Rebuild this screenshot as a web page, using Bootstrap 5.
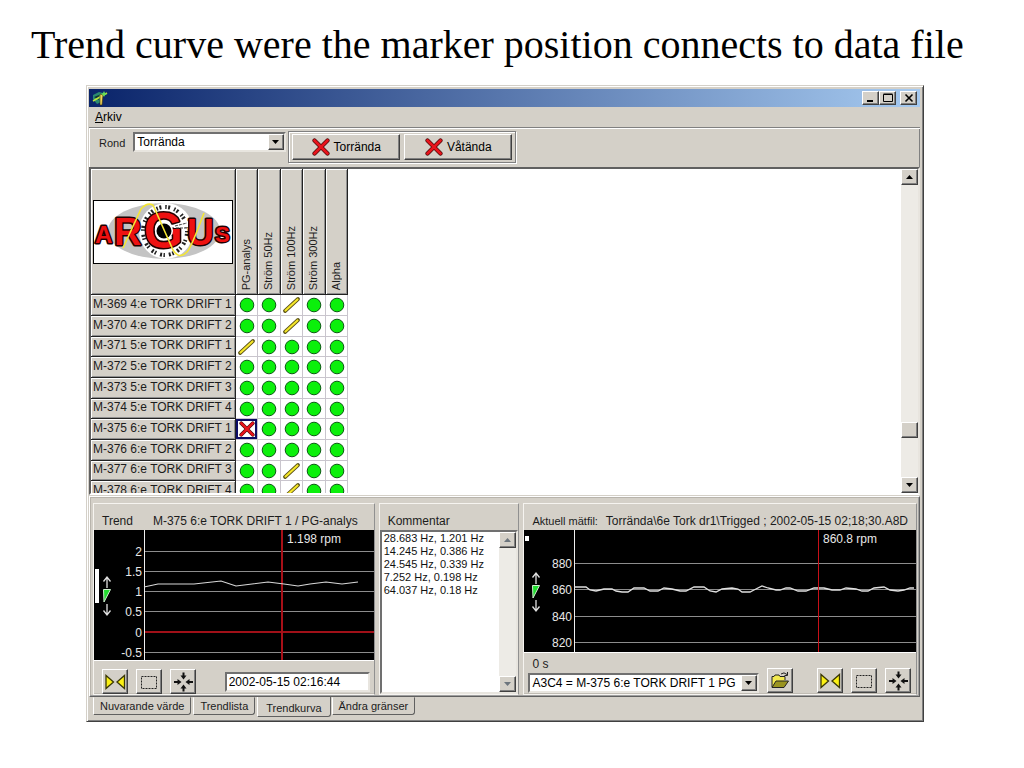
<!DOCTYPE html>
<html lang="sv">
<head>
<meta charset="utf-8">
<meta name="viewport" content="width=device-width, initial-scale=1">
<title>Argus trend</title>
<link href="https://cdn.jsdelivr.net/npm/bootstrap@5.3.0/dist/css/bootstrap.min.css" rel="stylesheet">
<style>
:root{--face:#d4d0c8;--lite:#fff;--shade:#808080;--dark:#404040}
body{background:#fff;color:#1c1c1c;font:12px/14px "Liberation Sans",Arial,sans-serif}
h1{font:40px/46px "Liberation Serif","Times New Roman",serif;color:#000;padding:22px 0 0 31px}
.app-window{margin:17px 100px 40px 86px;background:var(--face);border:1px solid;border-color:#d4d0c8 #404040 #404040 #d4d0c8;box-shadow:inset 1px 1px #fff,inset -1px -1px #808080;padding:3px 3px 4px 2px}
.title-bar{height:18px;background:linear-gradient(90deg,#0a246a,#a6caf0);padding:0 3px}
.raised{background:var(--face);border:1px solid;border-color:#fff #404040 #404040 #fff;box-shadow:inset -1px -1px #808080;border-radius:0;padding:0;color:#000}
.sunken{border:2px solid;border-color:#707070 #e8e5df #e8e5df #707070;border-radius:0;background:#fff}
.cap-btn{width:17px;height:14px;line-height:0}
.menu-bar{height:20px;padding:3px 6px}
.menu-bar a{color:#000;text-decoration:none}
.tool-bar{height:40px;border-top:1px solid #808080;box-shadow:inset 1px 1px #fff,inset -1px 0 #808080;padding:4px 0 0 10px;font-size:11px}
.pick{position:relative}
.pick select{appearance:none;width:100%;height:20px;padding:0 18px 0 2px;font:inherit;color:#000;line-height:15px;outline:0}
.pick span{position:absolute;right:2px;top:2px;width:16px;height:16px;pointer-events:none;line-height:0}
.round-pick{width:153px;font-size:12px}
.frame{border:1px solid #808080;box-shadow:inset 1px 1px #fff,1px 1px #fff;padding:2px 3px;height:32px;gap:4px;margin:-1px 0 0 2px}
.frame button{width:108px;height:26px;font-size:12px;gap:4px}
.status-view{height:328px;border:2px solid;border-color:#606060 #e8e5df #fff #606060;background:#fff;overflow:hidden}
.status{border-collapse:separate;border-spacing:0;table-layout:fixed;width:257px;height:0}
.status th{background:var(--face);font-weight:400;padding:0;border-right:1px solid #222;border-bottom:1px solid #222;box-shadow:inset 1px 1px #fff,inset -1px -1px #909090;color:#1c1c1c}
.status thead th{height:126px;vertical-align:bottom}
.status thead th:first-child{vertical-align:middle}
.status tbody th{height:21px;padding:0 0 3px 2px;line-height:14px;white-space:nowrap}
.status tbody td{padding:0;border-right:1px solid #c9c5cd;border-bottom:1px solid #c9c5cd;text-align:center;line-height:0;height:21px}
.status tbody tr:nth-child(3n) th,.status tbody tr:nth-child(3n) td{height:20px}
.status tbody td.picked{box-shadow:inset 0 0 0 2px #0c0c66}
.upright{writing-mode:vertical-rl;transform:rotate(180deg);font-size:11px;line-height:16px;padding-top:4px;margin:0 auto;width:18px;white-space:nowrap}
.brand-mark{display:block;margin:0 0 0 2px}
.scroller{width:17px;background:#edebe6}
.scroller button{width:17px;height:16px;line-height:0}
.tab-page{margin-top:1px;border:1px solid;border-color:#fff #606060 #606060 #fff;box-shadow:inset -1px -1px #a0a0a0,inset 1px 1px #b8b4ac;padding:6px 2px 2px 3px;height:201px}
.panes{display:grid;grid-template-columns:282fr 141fr 394fr;gap:4px;height:100%}
.pane{border:1px solid;border-color:#f6f4f0 #909090 #f6f4f0 #f6f4f0;box-shadow:inset 0 -1px #c0bcb4;min-width:0}
.pane-head{height:26px;padding:10px 8px 0;white-space:nowrap}
.file-label{font-size:11px;width:78px}
.plot{display:block;width:100%;background:#000;border-bottom:1px solid #fff}
.plot text{fill:#e8e8e8;font:12px "Liberation Sans",Arial,sans-serif}
.plot .num{text-anchor:end}
.sq{width:26px;height:25px;line-height:0}
.stamp{width:145px;height:20px;padding:0 2px;font:inherit;color:#000}
.chan-row{padding:0 5px 0 4px}
.chan-label{height:20px;padding:4px 4px 0}
.note{resize:none;border:0;padding:0 0 0 2px;font:11px/13px "Liberation Sans",Arial,sans-serif;color:#111;outline:0;overflow:hidden;min-width:0}
.tab-row{height:20px;padding-left:4px}
.tab-row button{background:var(--face);border:1px solid;border-color:transparent #606060 #606060 #fff;height:18px;padding:0 6px;border-radius:0 0 3px 1px;font:11px/15px "Liberation Sans",Arial,sans-serif;color:#1c1c1c;margin-right:2px;white-space:nowrap}
.tab-row button.on{height:20px;padding:3px 8px 0;margin:0 1px 0 0;border-top:0}
</style>
</head>
<body>
<svg width="0" height="0" class="position-absolute" aria-hidden="true">
<defs>
<symbol id="up" viewBox="0 0 14 12"><path d="M3 8h7L6.500 4z" fill="currentColor"/></symbol>
<symbol id="down" viewBox="0 0 14 12"><path d="M3 4h7L6.500 8z" fill="currentColor"/></symbol>
<symbol id="ok" viewBox="0 0 16 16"><circle cx="8" cy="8" r="6.800" fill="#0bf00b" stroke="#0c5a14"/></symbol>
<symbol id="pen" viewBox="0 0 20 18"><path d="M3 15L16 3" stroke="#5a5216" stroke-width="3.800" stroke-linecap="round"/><path d="M3.500 14.500L15.500 3.500" stroke="#f5e62a" stroke-width="2.200" stroke-linecap="round"/></symbol>
<symbol id="cross" viewBox="0 0 18 18"><path d="M2.500 2.500L15.500 15.500M15.500 2.500L2.500 15.500" stroke="#4a0808" stroke-width="4.200" stroke-linecap="round"/><path d="M2.500 2.500L15.500 15.500M15.500 2.500L2.500 15.500" stroke="#e8141c" stroke-width="2.800" stroke-linecap="round"/></symbol>
<symbol id="bow" viewBox="0 0 24 22"><path d="M3 4.500v13L10.500 11zM21.500 4.500v13L14 11z" fill="#fbf014" stroke="#3a3806" stroke-width="1.300"/></symbol>
<symbol id="marquee" viewBox="0 0 24 22"><path d="M4.500 5.500h15v12h-15z" fill="none" stroke="#222" stroke-dasharray="2 1"/></symbol>
<symbol id="center" viewBox="0 0 24 22"><path d="M12.500 1.500v4M12.500 20.500v-4M3 11h5M22 11h-5" stroke="#111" stroke-width="2"/><path d="M9.500 4.500h6L12.500 8.500zM9.500 17.500h6L12.500 13.500zM6.500 8v6L10.500 11zM18.500 8v6L14.500 11z" fill="#111"/></symbol>
<symbol id="folder" viewBox="0 0 24 22"><path d="M4 17V6.500h2l1-1.500h4l1 1.500h5V10" fill="#f3ea50" stroke="#222"/><path d="M4 17.500l4-6.500h12.500l-4.500 6.500z" fill="#9a9420" stroke="#222"/><path d="M13 4q3-2.500 6 .5M19.500 2v3.500h-3" fill="none" stroke="#222"/></symbol>
<symbol id="spin" viewBox="0 0 12 42"><path d="M6 2v11M2.500 6.500L6 2l3.500 4.500M6 40V29M2.500 35.500L6 40l3.500-4.500" fill="none" stroke="#e0e0e0" stroke-width="1.300"/><path d="M2.500 14.500h7L3 27z" fill="#22dd30" stroke="#d0f0d0"/></symbol>
</defs>
</svg>

<h1 class="m-0 text-nowrap">Trend curve were the marker position connects to data file</h1>

<main class="app-window">
  <header class="title-bar d-flex align-items-center">
    <svg width="16" height="16" viewBox="0 0 16 16" aria-hidden="true"><path d="M1 5l6-3 4 1-2 9-4 2-4-5z" fill="#2b8a70"/><path d="M2 7l5-2v5z" fill="#0d3436"/><path d="M1 11L15 3" stroke="#bde53a" stroke-width="1.500"/><path d="M8 4l3 1-1 10H8z" fill="#f0d85a" stroke="#3a2c08" stroke-width=".6"/><path d="M12 1l1 2 2 1-2 1-1 2-1-2-2-1 2-1z" fill="#63dc58"/></svg>
    <div class="ms-auto d-flex">
      <button class="raised cap-btn" aria-label="Minimera"><svg width="14" height="12"><path d="M3 9h6" stroke="#000" stroke-width="2"/></svg></button>
      <button class="raised cap-btn" aria-label="Maximera"><svg width="14" height="12"><path d="M2.500 2.500h9v7h-9zM2.500 2h9" fill="none" stroke="#000"/></svg></button>
      <button class="raised cap-btn ms-1" aria-label="Stäng"><svg width="14" height="12"><path d="M3.500 2.500l7 7M10.500 2.500l-7 7" stroke="#000" stroke-width="1.600"/></svg></button>
    </div>
  </header>
  <nav class="menu-bar"><a href="#"><u>A</u>rkiv</a></nav>

  <div class="tool-bar d-flex align-items-start">
    <label for="rond" class="me-2 pt-1">Rond</label>
    <div class="pick round-pick"><select id="rond" class="sunken"><option>Torrända</option></select><span class="raised"><svg width="14" height="14" viewBox="0 0 14 12"><use href="#down"/></svg></span></div>
    <div class="frame d-flex">
      <button class="raised d-flex align-items-center justify-content-center"><svg width="18" height="18"><use href="#cross"/></svg>Torrända</button>
      <button class="raised d-flex align-items-center justify-content-center"><svg width="18" height="18"><use href="#cross"/></svg>Våtända</button>
    </div>
  </div>

  <section class="status-view d-flex">
    <div class="flex-grow-1">
      <table class="status">
        <colgroup><col style="width:145px"><col style="width:22px"><col style="width:23px"><col style="width:22px"><col style="width:23px"><col style="width:22px"></colgroup>
        <thead><tr>
          <th>
            <svg class="brand-mark" width="140" height="64" viewBox="0 0 140 64" role="img" aria-label="Argus">
              <rect x=".5" y=".5" width="139" height="63" fill="#fff" stroke="#000"/>
              <ellipse cx="71" cy="31" rx="56" ry="28" fill="#c4c4c4"/>
              <ellipse cx="73" cy="31" rx="27" ry="28" fill="#fff"/>
              <ellipse cx="72" cy="31" rx="22" ry="24" fill="none" stroke="#222" stroke-width="4" stroke-dasharray="1.500 1.500 2 4"/>
              <g font-family="Liberation Sans,Arial,sans-serif" font-weight="700" fill="#ee1111" stroke="#200" stroke-width="3" paint-order="stroke" stroke-linejoin="round">
                <text x="2" y="43" font-size="24">A</text>
                <text x="122" y="42" font-size="22">S</text>
                <text x="21" y="45" font-size="38">R</text>
                <text x="94" y="45" font-size="37">U</text>
                <text x="51" y="48" font-size="50">G</text>
              </g>
              <circle cx="71" cy="31" r="9" fill="#fff"/><circle cx="71" cy="31" r="7.500" fill="#000"/>
              <path d="M81 25l14-4v6l-14 1z" fill="#fff"/><path d="M82 26l12-3M83 28h12" stroke="#444" stroke-dasharray="3 1"/>
              <path d="M30 48L48 9Q54 2 60 5L80 50Q86 60 94 52Q98 48 111 13" fill="none" stroke="#f4e634" stroke-width="1.600"/>
            </svg>
          </th>
          <th><div class="upright">PG-analys</div></th><th><div class="upright">Ström 50Hz</div></th><th><div class="upright">Ström 100Hz</div></th><th><div class="upright">Ström 300Hz</div></th><th><div class="upright">Alpha</div></th>
        </tr></thead>
        <tbody id="rows"></tbody>
      </table>
    </div>
    <div class="scroller d-flex flex-column">
      <button class="raised" aria-label="Upp"><svg width="14" height="12"><use href="#up"/></svg></button>
      <button class="raised mt-auto" aria-label="Läge"></button>
      <button class="raised" style="margin-top:39px" aria-label="Ned"><svg width="14" height="12"><use href="#down"/></svg></button>
    </div>
  </section>

  <section class="tab-page">
    <div class="panes">
      <div class="pane">
        <div class="pane-head d-flex"><span class="me-3">Trend</span><span class="ms-1">M-375 6:e TORK DRIFT 1 / PG-analys</span></div>
        <svg class="plot" height="131">
          <path d="M50 21.500h400M50 41.500h400M50 61.500h400M50 81.500h400M50 122.500h400" stroke="#8c8c8c"/>
          <path d="M50 102h400" stroke="#a01018" stroke-width="2"/>
          <path d="M50.500 0v130" stroke="#eee"/>
          <path d="M188 0v130" stroke="#a81018" stroke-width="2"/>
          <polyline points="50,57 64,54 100,54 127,51 142,56 158,54 174,52 190,54 204,56 216,54 232,52 248,54 256,53 264,52" fill="none" stroke="#d8d8d8" stroke-width="1.200"/>
          <rect x="1" y="39" width="4" height="34" fill="#fff"/>
          <use href="#spin" x="7" y="45" width="12" height="42"/>
          <text class="num" x="48" y="26">2</text><text class="num" x="48" y="46">1.5</text><text class="num" x="48" y="66">1</text><text class="num" x="48" y="86">0.5</text><text class="num" x="48" y="107">0</text><text class="num" x="48" y="127">-0.5</text>
          <text x="193" y="13">1.198 rpm</text>
        </svg>
        <div class="d-flex gap-2 pt-2 ps-2 pe-1 align-items-center">
          <button class="raised sq" aria-label="Zooma ut"><svg width="24" height="22"><use href="#bow"/></svg></button>
          <button class="raised sq" aria-label="Markera"><svg width="24" height="22"><use href="#marquee"/></svg></button>
          <button class="raised sq" aria-label="Centrera"><svg width="24" height="22"><use href="#center"/></svg></button>
          <input class="sunken stamp ms-auto" aria-label="Tidpunkt" value="2002-05-15 02:16:44">
        </div>
      </div>
      <div class="pane d-flex flex-column">
        <label for="note" class="pane-head">Kommentar</label>
        <div class="sunken d-flex flex-grow-1">
          <textarea id="note" class="note flex-grow-1">28.683 Hz, 1.201 Hz
14.245 Hz, 0.386 Hz
24.545 Hz, 0.339 Hz
7.252 Hz, 0.198 Hz
64.037 Hz, 0.18 Hz</textarea>
          <div class="scroller d-flex flex-column justify-content-between">
            <button class="raised text-secondary" aria-label="Upp"><svg width="14" height="12"><use href="#up"/></svg></button>
            <button class="raised text-secondary" aria-label="Ned"><svg width="14" height="12"><use href="#down"/></svg></button>
          </div>
        </div>
      </div>
      <div class="pane">
        <div class="pane-head d-flex"><span class="file-label">Aktuell mätfil:</span><span>Torrända\6e Tork dr1\Trigged ; 2002-05-15 02;18;30.A8D</span></div>
        <svg class="plot" height="123">
          <path d="M50 33.500h600M50 59.500h600M50 86.500h600M50 112.500h600" stroke="#8c8c8c"/>
          <path d="M50.500 0v123" stroke="#eee"/>
          <polyline id="wave" fill="none" stroke="#e0e0e0" stroke-width="1.300" points="50,57 62,57 66,60 72,61 80,59 88,59 92,61 98,62 104,62 110,58 120,58 126,61 134,61 140,58 148,59 156,61 162,61 170,57 180,57 186,61 192,62 198,59 208,58 214,59 218,62 226,62 230,60 238,56 244,58 252,60 256,60 262,58 266,58 274,61 282,61 290,58 300,58 308,60 316,60 322,58 332,59 338,61 344,61 350,58 360,57 366,60 374,61 380,60 386,58 390,58"/>
          <path d="M294.500 0v123" stroke="#c81018"/>
          <rect x="1" y="6" width="4" height="5" fill="#fff"/>
          <use href="#spin" x="6" y="41" width="12" height="42"/>
          <text class="num" x="48" y="38">880</text><text class="num" x="48" y="64">860</text><text class="num" x="48" y="91">840</text><text class="num" x="48" y="117">820</text>
          <text x="299" y="13">860.8 rpm</text>
        </svg>
        <div class="chan-row d-flex align-items-end">
          <div class="flex-grow-1">
            <label for="chan" class="chan-label d-block">0 s</label>
            <div class="pick"><select id="chan" class="sunken"><option>A3C4 = M-375 6:e TORK DRIFT 1 PG</option></select><span class="raised"><svg width="14" height="14" viewBox="0 0 14 12"><use href="#down"/></svg></span></div>
          </div>
          <button class="raised sq ms-2" aria-label="Öppna"><svg width="24" height="22"><use href="#folder"/></svg></button>
          <button class="raised sq ms-4" aria-label="Zooma ut"><svg width="24" height="22"><use href="#bow"/></svg></button>
          <button class="raised sq ms-2" aria-label="Markera"><svg width="24" height="22"><use href="#marquee"/></svg></button>
          <button class="raised sq ms-2" aria-label="Centrera"><svg width="24" height="22"><use href="#center"/></svg></button>
        </div>
      </div>
    </div>
  </section>
  <div class="tab-row d-flex align-items-start">
    <button>Nuvarande värde</button><button>Trendlista</button><button class="on">Trendkurva</button><button>Ändra gränser</button>
  </div>
</main>

<script>
// o = in range, p = marked for editing, x = alarm
const data=[["M-369 4:e TORK DRIFT 1","oopoo"],["M-370 4:e TORK DRIFT 2","oopoo"],["M-371 5:e TORK DRIFT 1","poooo"],["M-372 5:e TORK DRIFT 2","ooooo"],["M-373 5:e TORK DRIFT 3","ooooo"],["M-374 5:e TORK DRIFT 4","ooooo"],["M-375 6:e TORK DRIFT 1","xoooo"],["M-376 6:e TORK DRIFT 2","ooooo"],["M-377 6:e TORK DRIFT 3","oopoo"],["M-378 6:e TORK DRIFT 4","oopoo"]];
const art={o:'<svg width="16" height="16"><use href="#ok"/></svg>',p:'<svg width="20" height="18"><use href="#pen"/></svg>',x:'<svg width="18" height="16"><use href="#cross"/></svg>'};
document.getElementById("rows").innerHTML=data.map(([n,s])=>`<tr><th>${n}</th>${[...s].map(c=>`<td${c==="x"?' class="picked"':""}>${art[c]}</td>`).join("")}</tr>`).join("");
</script>
<script src="https://cdn.jsdelivr.net/npm/bootstrap@5.3.0/dist/js/bootstrap.bundle.min.js"></script>
</body>
</html>
